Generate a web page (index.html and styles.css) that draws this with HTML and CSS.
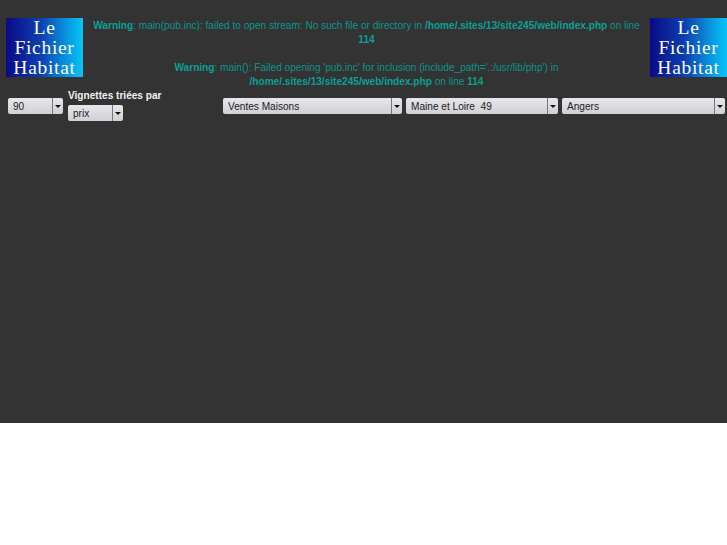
FILE: index.html
```html
<!DOCTYPE html>
<html lang="fr">
<head>
<meta charset="utf-8">
<title>Le Fichier Habitat</title>
<link rel="stylesheet" href="styles.css">
</head>
<body>
<div class="page">
  <header class="top">
    <div class="logo"><span>Le</span><span>Fichier</span><span>Habitat</span></div>
    <div class="warnings">
      <p><b>Warning</b>: main(pub.inc): failed to open stream: No such file or directory in <b>/home/.sites/13/site245/web/index.php</b> on line <b>114</b></p>
      <p><b>Warning</b>: main(): Failed opening 'pub.inc' for inclusion (include_path='.:/usr/lib/php') in <b>/home/.sites/13/site245/web/index.php</b> on line <b>114</b></p>
    </div>
    <div class="logo"><span>Le</span><span>Fichier</span><span>Habitat</span></div>
  </header>
  <nav class="controls">
    <div class="select s-count"><span class="val">90</span><span class="arrow"></span></div>
    <div class="sort">
      <div class="sort-label">Vignettes triées par</div>
      <div class="select s-sort"><span class="val">prix</span><span class="arrow"></span></div>
    </div>
    <div class="select s-type"><span class="val">Ventes Maisons</span><span class="arrow"></span></div>
    <div class="select s-dept"><span class="val">Maine et Loire&nbsp; 49</span><span class="arrow"></span></div>
    <div class="select s-city"><span class="val">Angers</span><span class="arrow"></span></div>
  </nav>
</div>
</body>
</html>
```

FILE: styles.css
```css
html, body { margin: 0; padding: 0; background: #fff; }
body { font-family: "Liberation Sans", Arial, sans-serif; font-size: 10px; }
.page { height: 423px; background: #333; overflow: hidden; }
.top { display: flex; justify-content: space-between; align-items: flex-start; padding: 18px 0 0 6px; }
.logo {
  width: 77px; height: 59px; flex: none; display: flex; flex-direction: column; align-items: center;
  justify-content: center;
  background: linear-gradient(90deg, #0b0a85 0%, #0d3fb0 45%, #06a5e8 85%, #08c4f5 100%);
  color: #fbfcff; font-family: "Liberation Serif", "Times New Roman", serif; font-size: 19.5px; line-height: 20px; letter-spacing: 0.7px;
}
.warnings { flex: 1; min-width: 0; padding: 1px 8px 0; text-align: center; color: #0c938b; font-size: 10.1px; line-height: 14px; }
.warnings p { margin: 0 0 14px; }
.warnings p:last-child { margin-bottom: 0; }
.warnings b { color: #0aa095; }
.controls { display: flex; align-items: flex-start; padding: 0 0 0 8px; }
.select {
  display: flex; height: 16px; box-sizing: border-box; border-radius: 2px;
  background: linear-gradient(#e7e7eb, #d0d0d5); color: #1c1c1c; font-size: 10.1px; line-height: 17px;
}
.val { flex: 1; min-width: 0; padding-left: 5px; white-space: nowrap; overflow: hidden; }
.arrow { width: 10px; flex: none; border-left: 1px solid #77777c; position: relative; }
.arrow::after {
  content: ""; position: absolute; left: 2px; top: 7px;
  border-left: 3px solid transparent; border-right: 3px solid transparent; border-top: 3px solid #111;
}
.s-count { width: 55px; margin-top: 9px; margin-right: 5px; }
.sort { width: 155px; }
.sort-label { color: #f0f0f0; font-weight: bold; font-size: 10.1px; line-height: 14px; margin-bottom: 2px; white-space: nowrap; }
.s-sort { width: 55px; }
.s-type { width: 179px; margin-top: 9px; margin-right: 4px; }
.s-dept { width: 152px; margin-top: 9px; margin-right: 4px; }
.s-city { width: 163px; margin-top: 9px; }
```
